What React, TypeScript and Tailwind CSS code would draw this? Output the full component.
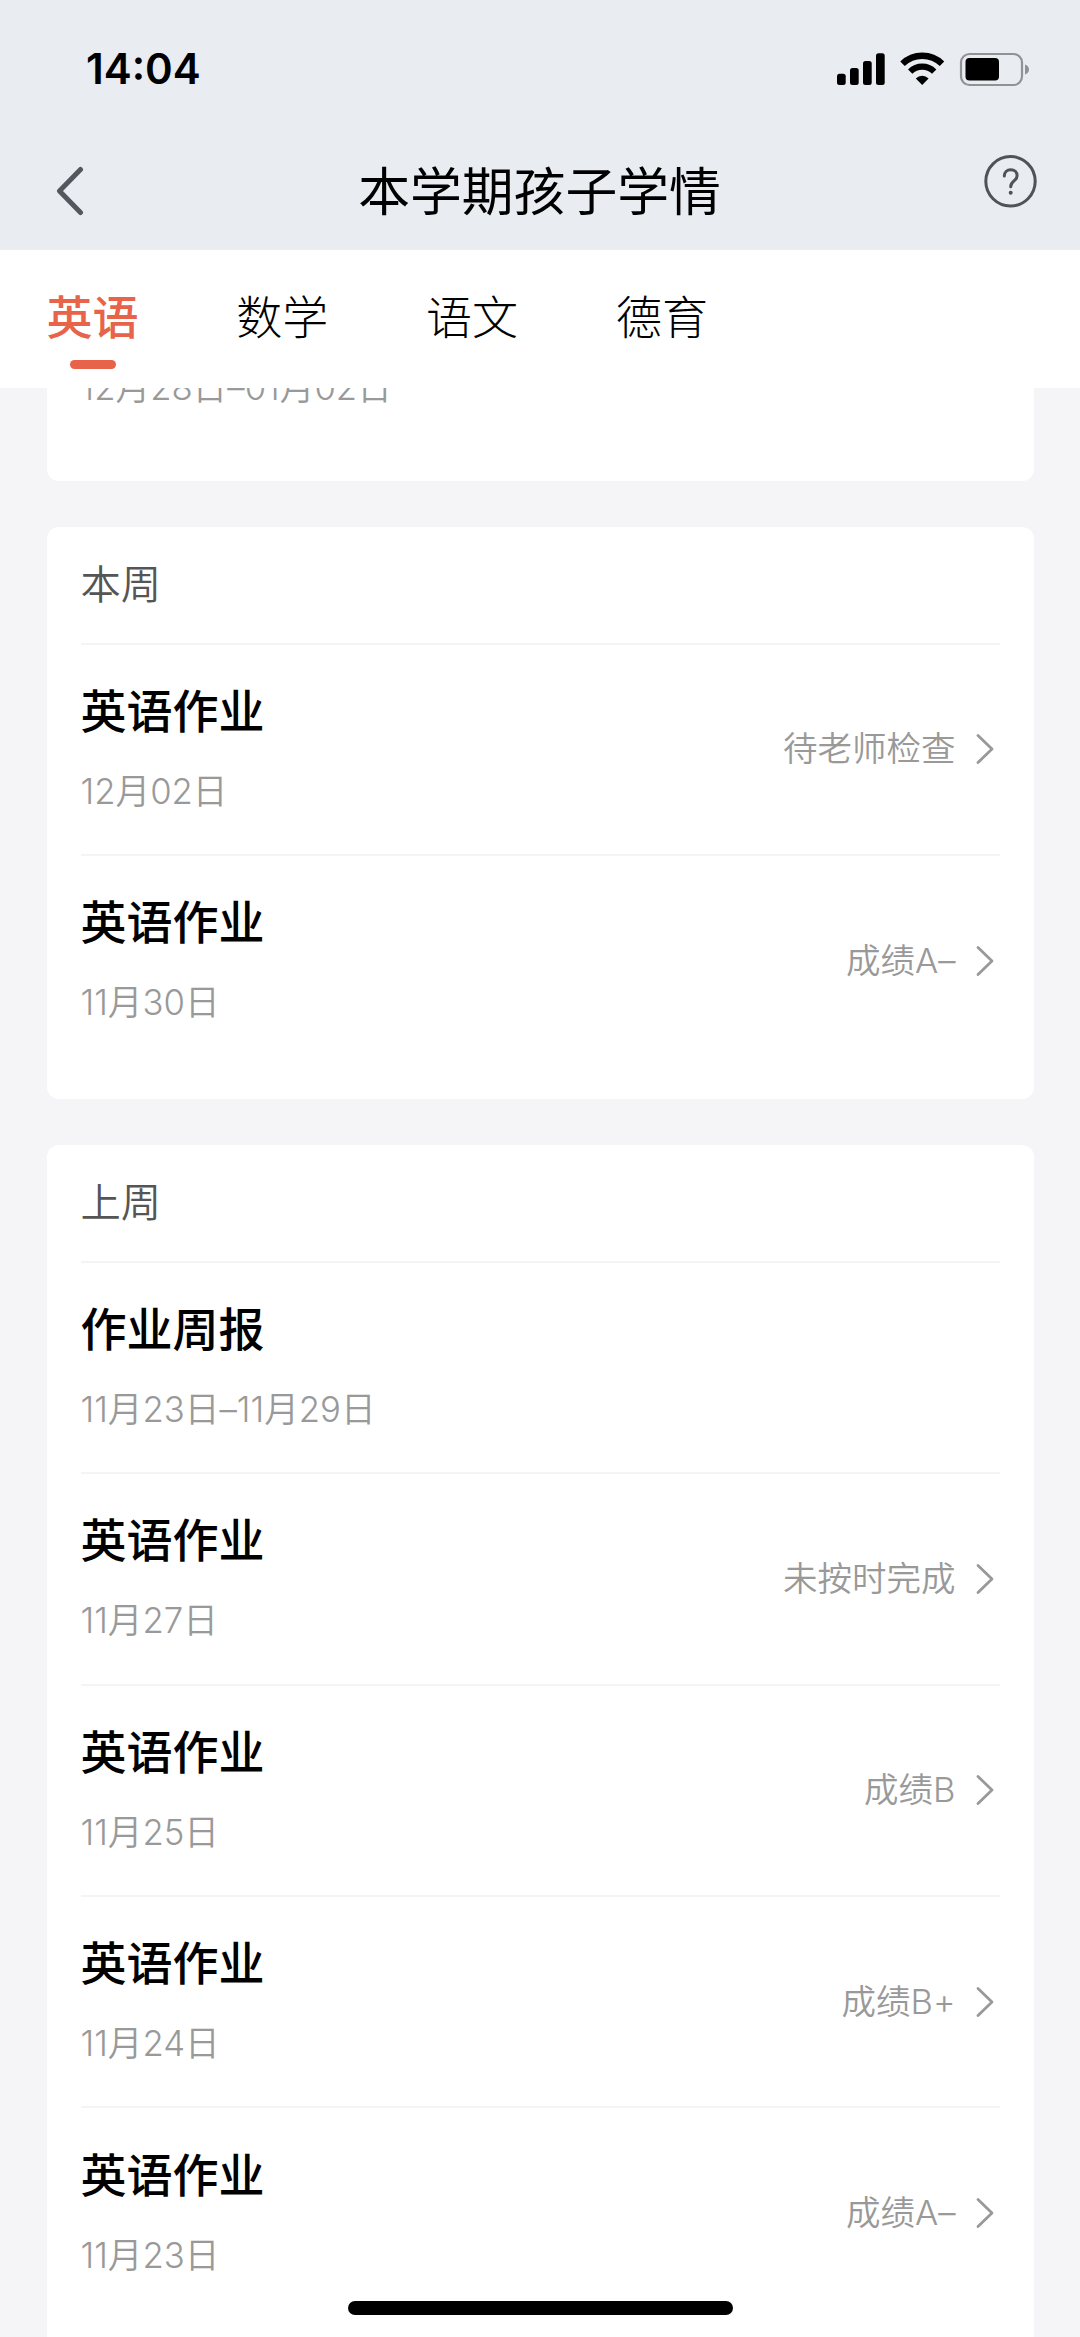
type Homework = {
  title?: string;
  date: string;
  status?: string;
}

type WeekCardProps = {
  name?: string;
  items: Homework[];
}

const tabs = ["英语", "数学", "语文", "德育"];

const thisWeek: Homework[] = [
  { title: "英语作业", date: "12月02日", status: "待老师检查" },
  { title: "英语作业", date: "11月30日", status: "成绩A–" },
];

const lastWeek: Homework[] = [
  { title: "作业周报", date: "11月23日–11月29日" },
  { title: "英语作业", date: "11月27日", status: "未按时完成" },
  { title: "英语作业", date: "11月25日", status: "成绩B" },
  { title: "英语作业", date: "11月24日", status: "成绩B+" },
  { title: "英语作业", date: "11月23日", status: "成绩A–" },
];

const StatusBar = () => {
  return (
    <div className="flex h-[138px] items-center justify-between pl-[86px] pr-[50px]">
      <span className="font-['Inter',sans-serif] text-[42px] font-semibold leading-none text-black">14:04</span>
      <svg width="194" height="36" viewBox="836 50 194 36">
        {/* 信号 */}
        <rect x="837" y="72.7" width="8.7" height="11.3" rx="2.5" />
        <rect x="850" y="67" width="8.7" height="17" rx="2.5" />
        <rect x="863" y="60" width="8.7" height="24" rx="2.5" />
        <rect x="876" y="52.3" width="8.7" height="31.7" rx="2.5" />
        {/* Wi-Fi */}
        <path d="M902.5 62.8a28.3 28.3 0 0 1 39.5 0" fill="none" stroke="#000" strokeWidth="6.4" />
        <path d="M910.2 70.6a17.2 17.2 0 0 1 24 0" fill="none" stroke="#000" strokeWidth="6.2" />
        <path d="M922.2 84l-6.4-6.6a9.3 9.3 0 0 1 12.8 0z" />
        {/* 电池 */}
        <rect x="961" y="53" width="61" height="31" rx="8.5" fill="none" stroke="#909296" strokeWidth="2.2" />
        <rect x="965.5" y="57" width="33.5" height="22.6" rx="4" />
        <path d="M1025 63.5c2.6.8 4 2.6 4 5s-1.4 4.2-4 5z" fill="#909296" />
      </svg>
    </div>
  );
};

const NavBar = () => {
  return (
    <div className="flex h-28 items-start justify-between pl-[55px] pr-[41px]">
      <svg width="54" height="50" viewBox="0 0 54 50" className="mt-7" fill="none" stroke="#55565f" strokeWidth="5" strokeLinecap="round" strokeLinejoin="round">
        <path d="M25.5 3.5L4.5 25l21 21.5" />
      </svg>
      <h1 className="mt-[15px] mr-[13px] text-[51.8px] leading-[78px] text-black">本学期孩子学情</h1>
      <svg width="56" height="56" viewBox="0 0 56 56" className="mt-[15px]" fill="none" stroke="#505255" strokeWidth="3" strokeLinecap="round">
        <circle cx="27.5" cy="28.3" r="24.7" />
        <path d="M21.3 23c0-3.8 2.6-6.2 6.4-6.2s6.4 2.4 6.4 5.9c0 5.3-6.4 5.3-6.4 11" />
        <circle cx="27.7" cy="39.8" r="1.3" fill="#505255" strokeWidth="1.4" />
      </svg>
    </div>
  );
};

const TabBar = () => {
  return (
    <div className="flex h-[138px] shrink-0 gap-[97.8px] bg-white pl-[46.5px]">
      {tabs.map((tab, index) => (
        <div key={tab} className="flex flex-col items-center pt-[34px]">
          <span
            className={
              index === 0
                ? "text-[46px] font-medium leading-[66px] text-[#e7634a]"
                : "text-[46px] font-light leading-[66px] text-black"
            }
          >
            {tab}
          </span>
          {index === 0 && <span className="mt-2.5 h-[9px] w-[46px] rounded-full bg-[#e7634a]" />}
        </div>
      ))}
    </div>
  );
};

const HomeworkRow = ({ title, date, status }: Homework) => {
  return (
    <li className="flex h-[211.4px] items-center justify-between border-t-2 border-[#f4f4f5] pr-[6px]">
      <div className="pb-[5px]">
        {title && <h3 className="mb-[22px] text-[46px] font-medium leading-[66px] text-black">{title}</h3>}
        <p className="text-[34.7px] font-[350] leading-[50px] text-[#999]">{date}</p>
      </div>
      {status && (
        <div className="flex items-center gap-5 text-[34.5px] font-[350] leading-[50px] text-[#999]">
          {status}
          <svg width="18" height="32" viewBox="0 0 18 32" fill="none" stroke="#999" strokeWidth="2.8" strokeLinecap="round" strokeLinejoin="round">
            <path d="M2 2.5L16 16 2 29.5" />
          </svg>
        </div>
      )}
    </li>
  );
};

const WeekCard = ({ name, items }: WeekCardProps) => {
  return (
    <section className="shrink-0 rounded-xl bg-white px-[34px] pb-[33.5px]">
      {name && <h2 className="pt-7 pb-7 text-[40.3px] font-[350] leading-[60px] text-[#555]">{name}</h2>}
      <ul>
        {items.map((item) => (
          <HomeworkRow key={item.date} {...item} />
        ))}
      </ul>
    </section>
  );
};

export default function App() {
  return (
    <div className="relative flex h-[2337px] w-[1080px] flex-col overflow-hidden bg-[#f5f5f8] font-['Inter','Noto_Sans_CJK_SC',sans-serif]">
      <header className="h-[250px] shrink-0 bg-[#e9ecf1]">
        <StatusBar />
        <NavBar />
      </header>
      <TabBar />

      <main className="flex min-h-0 flex-1 flex-col gap-[46px] overflow-hidden px-[46.5px] [font-feature-settings:'calt'_0]">
        {/* 滚动到一半的卡片 */}
        <section className="h-[92.5px] shrink-0 rounded-b-xl bg-white px-[34px]">
          <p className="-mt-[26px] text-[34.7px] font-[350] leading-[50px] text-[#999]">12月28日–01月02日</p>
        </section>
        <WeekCard name="本周" items={thisWeek} />
        <WeekCard name="上周" items={lastWeek} />
      </main>

      {/* 底部横条 */}
      <div className="absolute bottom-[22px] left-[348px] h-3.5 w-[385px] rounded-full bg-black" />
    </div>
  );
}
